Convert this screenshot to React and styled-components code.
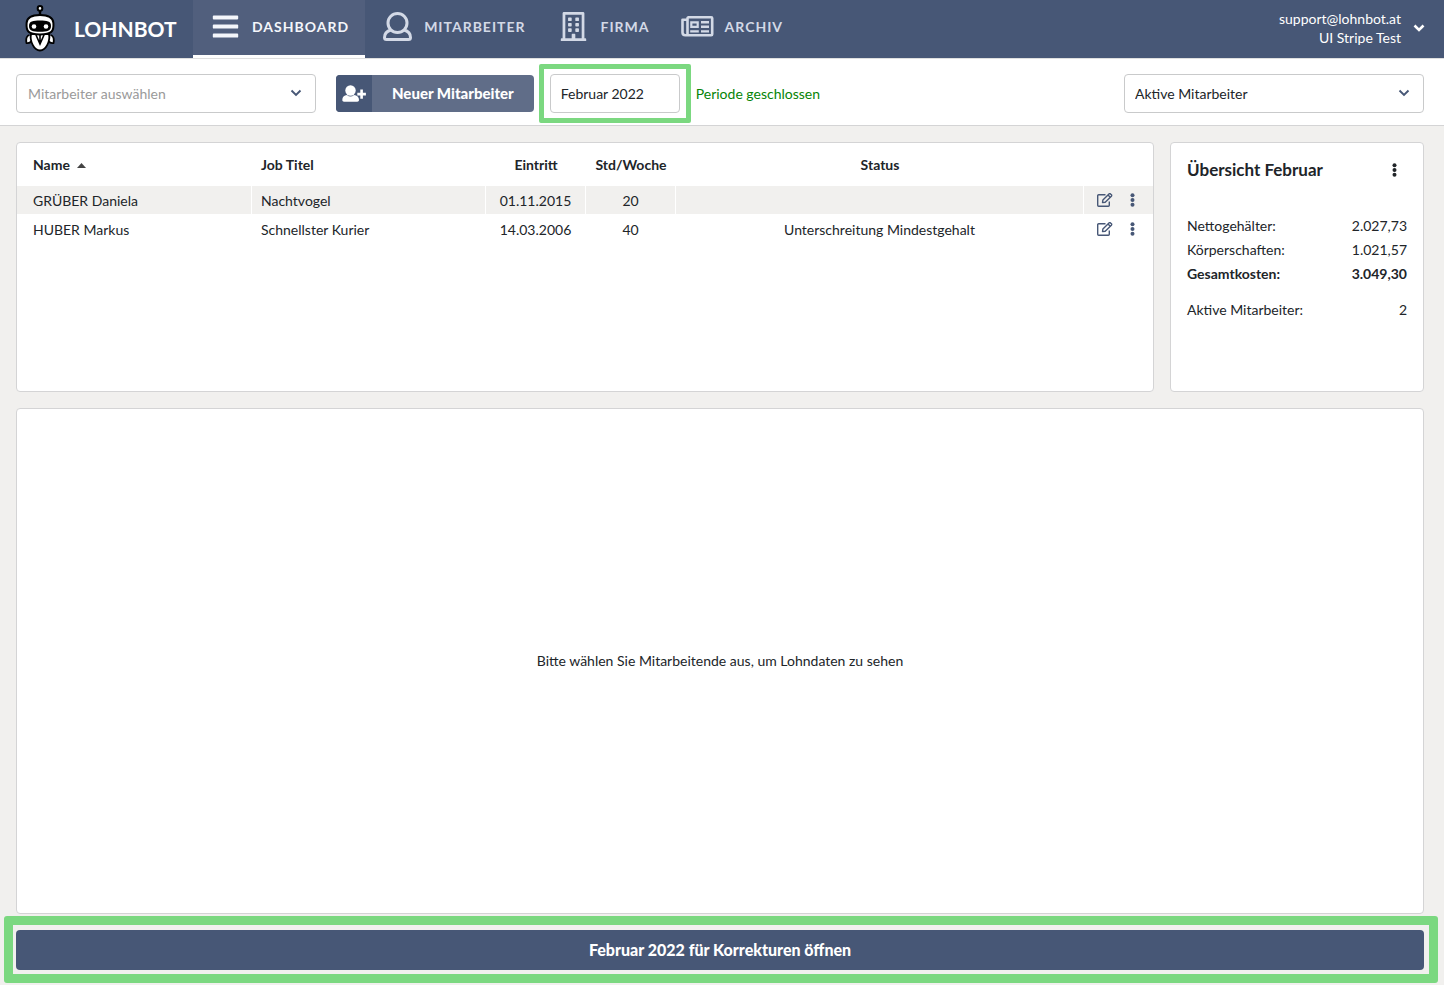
import React, { useState } from 'react';
import styled, { createGlobalStyle } from 'styled-components';
import { FaBars, FaRegBuilding } from 'react-icons/fa';

const GlobalStyle = createGlobalStyle`
  * {
    box-sizing: border-box;
  }

  body {
    margin: 0;
    background: #f1f0ee;
    color: #212529;
    font-family: Lato, sans-serif;
    font-size: 14px;
    line-height: 20px;
  }

  button, input, select {
    font: inherit;
    color: inherit;
  }

  button {
    padding: 0;
    border: 0;
    background: none;
    cursor: pointer;
  }
`;

const Page = styled.div`
  display: flex;
  flex-direction: column;
  min-height: 100vh;
`;

const Header = styled.header`
  display: flex;
  align-items: stretch;
  height: 58px;
  background: #475776;
  color: #fff;
`;

const Brand = styled.a`
  display: flex;
  align-items: center;
  gap: 19px;
  width: 193px;
  padding-left: 25px;
  color: #fff;
  font-size: 21px;
  font-weight: 700;
  text-decoration: none;
`;

const Nav = styled.nav`
  display: flex;
  flex: 1;
`;

const NavLink = styled.a`
  display: flex;
  align-items: center;
  gap: 9px;
  padding: 0 16px 2px 14px;
  border-bottom: 3px solid ${({ $active }) => ($active ? '#fff' : 'transparent')};
  background: ${({ $active }) => ($active ? '#515f7d' : 'transparent')};
  color: ${({ $active }) => ($active ? '#f4f6fb' : '#d3d9e6')};
  font-weight: 700;
  letter-spacing: 1px;
  text-decoration: none;
  text-transform: uppercase;
`;

const NavIcon = styled.span`
  display: flex;
  justify-content: center;
  width: 36px;

  svg {
    width: auto;
    height: 29px;
  }
`;

const Account = styled.button`
  display: flex;
  align-items: center;
  gap: 12px;
  padding: 0 19px 2px 0;
  line-height: 19px;
  text-align: right;
`;

const Toolbar = styled.div`
  display: flex;
  align-items: center;
  height: 68px;
  padding: 2px 20px 0 16px;
  border-top: 1px solid #dfdfdf;
  border-bottom: 1px solid #d4d4d5;
  background: #fff;
`;

const SelectBox = styled.div`
  position: relative;
  width: 300px;

  svg {
    position: absolute;
    top: 15px;
    right: 14px;
    color: #475776;
    pointer-events: none;
  }
`;

const Select = styled.select`
  display: block;
  width: 100%;
  height: 39px;
  padding: 2px 36px 0 ${({ $empty }) => ($empty ? '11px' : '10px')};
  border: 1px solid #c9cacb;
  border-radius: 4px;
  background: #fff;
  color: ${({ $empty }) => ($empty ? '#9a9a9a' : '#212529')};
  appearance: none;
`;

const NewButton = styled.button`
  display: flex;
  align-items: center;
  height: 37px;
  margin: 0 5px 0 20px;
  border-radius: 4px;
  overflow: hidden;
  background: #606d88;
  color: #fff;
  font-size: 15px;
  font-weight: 900;
`;

const NewIcon = styled.span`
  display: flex;
  align-items: center;
  justify-content: center;
  width: 36px;
  height: 100%;
  background: #475776;
`;

const NewLabel = styled.span`
  padding: 0 20px;
`;

const PeriodHighlight = styled.div`
  padding: 5px 6px;
  border: 5px solid #7bd880;
  border-radius: 2px;
`;

const PeriodInput = styled.input`
  display: block;
  width: 130px;
  height: 39px;
  padding: 0 10px;
  border: 1px solid #c9cacb;
  border-radius: 4px;
  background: #fff;
`;

const PeriodState = styled.span`
  flex: 1;
  padding: 2px 0 0 5px;
  color: #078407;
`;

const Main = styled.main`
  display: flex;
  flex: 1;
  flex-direction: column;
  gap: 16px;
  padding: 16px 20px 2px 16px;
`;

const TopRow = styled.div`
  display: grid;
  grid-template-columns: minmax(0, 1fr) 254px;
  gap: 16px;
  min-height: 250px;
`;

const Panel = styled.section`
  border: 1px solid #d4d4d5;
  border-radius: 4px;
  background: #fff;
`;

const Table = styled.table`
  width: 100%;
  table-layout: fixed;
  border-spacing: 0;
`;

const Th = styled.th`
  width: ${({ $width }) => $width || 'auto'};
  height: 43px;
  padding: 1px 9px 0;
  font-weight: 700;
  text-align: ${({ $align }) => $align || 'left'};
  white-space: nowrap;

  &:first-child {
    padding-left: 16px;
  }
`;

const SortButton = styled.button`
  display: flex;
  align-items: center;
  gap: 7px;
  font-weight: 700;
`;

const Td = styled.td`
  height: 29px;
  padding: 1px 9px 0;
  border-right: 1px solid #fff;
  border-bottom: 1px solid #fff;
  text-align: ${({ $align }) => $align || 'left'};

  tr:nth-child(odd) > & {
    background: #f1f0ee;
  }

  &:first-child {
    padding-left: 16px;
  }

  &:last-child {
    padding: 0;
    border-right: 0;
  }
`;

const Actions = styled.div`
  display: flex;
  align-items: center;
  gap: 17px;
  padding-left: 13px;
  color: #475776;
`;

const IconButton = styled.button`
  display: flex;
  color: inherit;
`;

const Overview = styled(Panel)`
  padding: 16px;
`;

const OverviewHead = styled.div`
  display: flex;
  align-items: center;
  justify-content: space-between;
  height: 22px;
  margin-bottom: 33px;
  padding-right: 10px;
`;

const OverviewTitle = styled.h2`
  margin: 0;
  font-size: 17px;
  font-weight: 700;
`;

const Sum = styled.div`
  display: flex;
  justify-content: space-between;
  margin-top: ${({ $spaced }) => ($spaced ? '12px' : '0')};
  font-weight: ${({ $total }) => ($total ? 700 : 400)};
  line-height: 24px;
`;

const PayrollPanel = styled(Panel)`
  display: flex;
  flex: 1;
  align-items: center;
  justify-content: center;
`;

const ReopenHighlight = styled.div`
  margin: -14px -14px 0 -12px;
  padding: 5px 5px 4px 3px;
  border: 9px solid #7bd880;
  border-radius: 3px;
`;

const ReopenButton = styled.button`
  display: block;
  width: 100%;
  height: 40px;
  border-radius: 4px;
  background: #475776;
  color: #fff;
  font-size: 16px;
  font-weight: 900;
`;

const RobotLogo = () => (
  <svg width="30" height="48" viewBox="0 0 30 48" aria-hidden="true">
    <path d="M15 6v6" stroke="#000" strokeWidth="2.4" />
    <circle cx="15" cy="3.4" r="2.3" fill="#fff" stroke="#000" strokeWidth="2" />
    <path d="M4.500 30C1.500 31 .8 34.500 1.500 38c2 .4 4-.4 4.800-2M25.500 30c3 1 3.700 4.500 3 8-2 .4-4-.4-4.800-2" fill="#fff" stroke="#000" strokeWidth="1.800" />
    <path d="M6 29h18c1.500 7-3 16.500-9 16.500S4.500 36 6 29z" fill="#fff" stroke="#000" strokeWidth="1.800" />
    <path d="M11 30l4 9 4-9M15 30v9" fill="none" stroke="#000" strokeWidth="1.600" />
    <path d="M15 10C7 10 2 12.500 1.600 18c-.6 8 1.400 11.500 13.400 11.500S29 26 28.400 18C28 12.500 23 10 15 10z" fill="#fff" stroke="#000" strokeWidth="2" />
    <path d="M15 15.500c-7 0-11 .5-11 5.500s4 5.800 11 5.800 11-.8 11-5.800-4-5.500-11-5.500z" fill="#000" />
    <circle cx="9" cy="21.500" r="2.300" fill="#fff" />
    <circle cx="21" cy="21.500" r="2.300" fill="#fff" />
  </svg>
);

const UserIcon = () => (
  <svg width="29" height="29" viewBox="0 0 29 29" fill="none" stroke="currentColor" strokeWidth="3" strokeLinejoin="round">
    <circle cx="14.500" cy="11" r="9.500" />
    <path d="M8 18c-4 1-6.500 3.500-6.500 7.500 0 1.200.8 2 2 2h22c1.200 0 2-.8 2-2 0-4-2.500-6.500-6.500-7.500" />
  </svg>
);

const NewsIcon = () => (
  <svg width="33" height="29" viewBox="0 0 33 29" fill="none" stroke="currentColor" strokeWidth="2.600">
    <path d="M6.500 23V6.300c0-.6.400-1 1-1H30.200c.6 0 1 .4 1 1v15.900c0 .6-.4 1-1 1H4.300c-1.600 0-2.800-1-2.800-2.600V7.800h4.500" strokeLinejoin="round" />
    <path d="M10.300 10.300h6.400v4.500h-6.400z" strokeWidth="2.200" />
    <path d="M9.200 19.400h8.600M20 10.300h8M20 14.800h8M20 19.400h8" strokeWidth="2.400" />
  </svg>
);

const UserPlusIcon = () => (
  <svg width="24" height="17" viewBox="0 0 24 17" fill="currentColor">
    <circle cx="8.500" cy="5.500" r="5.200" />
    <path d="M5 10c1.200 1 2.300 1.500 3.500 1.500s2.300-.5 3.500-1.500c3 .3 5 2 5 5 0 1-.7 1.700-1.700 1.700H2C1 16.700.3 16 .3 15c0-3 1.700-4.700 4.700-5z" />
    <path d="M18.300 4.500h2.600v3.300h3v2.600h-3v3.300h-2.600v-3.300h-3V7.800h3z" />
  </svg>
);

const Chevron = ({ bold }) => (
  <svg width="12" height="8" viewBox="0 0 12 8" fill="none" stroke="currentColor" strokeWidth={bold ? 2.6 : 1.9}>
    <path d="M1.500 1.500L6 6l4.500-4.500" />
  </svg>
);

const EditIcon = () => (
  <svg width="16" height="14" viewBox="0 0 16 14" fill="none" stroke="currentColor" strokeWidth="1.400" strokeLinejoin="round">
    <path d="M8.500 1.700H1.700c-.6 0-1 .4-1 1v9.600c0 .6.400 1 1 1h9.600c.6 0 1-.4 1-1V8.500" />
    <path d="M5.500 9.500l.4-2.600L12 .9c.5-.4 1-.4 1.500 0l.9.900c.4.500.4 1 0 1.500L8.200 9.200z" />
    <path d="M11 2l2.300 2.300" />
  </svg>
);

const DotsIcon = () => (
  <svg width="5" height="14" viewBox="0 0 5 14" fill="currentColor">
    <circle cx="2.500" cy="2.200" r="2" />
    <circle cx="2.500" cy="7" r="2" />
    <circle cx="2.500" cy="11.800" r="2" />
  </svg>
);

const SortIcon = () => (
  <svg width="9" height="5" viewBox="0 0 9 5" fill="#444">
    <path d="M4.500 0L9 5H0z" />
  </svg>
);

const navItems = [
  { label: 'Dashboard', icon: <FaBars />, active: true },
  { label: 'Mitarbeiter', icon: <UserIcon /> },
  { label: 'Firma', icon: <FaRegBuilding /> },
  { label: 'Archiv', icon: <NewsIcon /> },
];

const employees = [
  { name: 'GRÜBER Daniela', job: 'Nachtvogel', entry: '01.11.2015', hours: 20, status: '' },
  { name: 'HUBER Markus', job: 'Schnellster Kurier', entry: '14.03.2006', hours: 40, status: 'Unterschreitung Mindestgehalt' },
];

const sums = [
  { label: 'Nettogehälter:', value: '2.027,73' },
  { label: 'Körperschaften:', value: '1.021,57' },
  { label: 'Gesamtkosten:', value: '3.049,30', total: true },
  { label: 'Aktive Mitarbeiter:', value: '2', spaced: true },
];

const App = () => {
  const [employee, setEmployee] = useState('');
  const [period, setPeriod] = useState('Februar 2022');

  return (
    <Page>
      <GlobalStyle />
      <Header>
        <Brand href="#">
          <RobotLogo />
          <span>LOHNBOT</span>
        </Brand>
        <Nav>
          {navItems.map((item) => (
            <NavLink key={item.label} href="#" $active={item.active}>
              <NavIcon>{item.icon}</NavIcon>
              <span>{item.label}</span>
            </NavLink>
          ))}
        </Nav>
        <Account type="button">
          <span>
            support@lohnbot.at
            <br />
            UI Stripe Test
          </span>
          <Chevron bold />
        </Account>
      </Header>

      <Toolbar>
        <SelectBox>
          <Select
            aria-label="Mitarbeiter auswählen"
            value={employee}
            onChange={(e) => setEmployee(e.target.value)}
            $empty={!employee}
          >
            <option value="">Mitarbeiter auswählen</option>
            {employees.map((e) => (
              <option key={e.name} value={e.name}>{e.name}</option>
            ))}
          </Select>
          <Chevron />
        </SelectBox>
        <NewButton type="button">
          <NewIcon>
            <UserPlusIcon />
          </NewIcon>
          <NewLabel>Neuer Mitarbeiter</NewLabel>
        </NewButton>
        <PeriodHighlight>
          <PeriodInput
            aria-label="Periode"
            value={period}
            onChange={(e) => setPeriod(e.target.value)}
          />
        </PeriodHighlight>
        <PeriodState>Periode geschlossen</PeriodState>
        <SelectBox>
          <Select aria-label="Filter" defaultValue="active">
            <option value="active">Aktive Mitarbeiter</option>
          </Select>
          <Chevron />
        </SelectBox>
      </Toolbar>

      <Main>
        <TopRow>
          <Panel>
            <Table>
              <thead>
                <tr>
                  <Th $width="235px">
                    <SortButton type="button">
                      Name
                      <SortIcon />
                    </SortButton>
                  </Th>
                  <Th $width="234px">Job Titel</Th>
                  <Th $width="100px" $align="center">Eintritt</Th>
                  <Th $width="90px" $align="center">Std/Woche</Th>
                  <Th $align="center">Status</Th>
                  <Th $width="69px" aria-label="Aktionen" />
                </tr>
              </thead>
              <tbody>
                {employees.map((e) => (
                  <tr key={e.name}>
                    <Td>{e.name}</Td>
                    <Td>{e.job}</Td>
                    <Td $align="center">{e.entry}</Td>
                    <Td $align="center">{e.hours}</Td>
                    <Td $align="center">{e.status}</Td>
                    <Td>
                      <Actions>
                        <IconButton type="button" aria-label="Bearbeiten">
                          <EditIcon />
                        </IconButton>
                        <IconButton type="button" aria-label="Mehr">
                          <DotsIcon />
                        </IconButton>
                      </Actions>
                    </Td>
                  </tr>
                ))}
              </tbody>
            </Table>
          </Panel>

          <Overview>
            <OverviewHead>
              <OverviewTitle>Übersicht Februar</OverviewTitle>
              <IconButton type="button" aria-label="Mehr">
                <DotsIcon />
              </IconButton>
            </OverviewHead>
            {sums.map((s) => (
              <Sum key={s.label} $total={s.total} $spaced={s.spaced}>
                <span>{s.label}</span>
                <span>{s.value}</span>
              </Sum>
            ))}
          </Overview>
        </TopRow>

        <PayrollPanel>Bitte wählen Sie Mitarbeitende aus, um Lohndaten zu sehen</PayrollPanel>

        <ReopenHighlight>
          <ReopenButton type="button">Februar 2022 für Korrekturen öffnen</ReopenButton>
        </ReopenHighlight>
      </Main>
    </Page>
  );
};

export default App;
